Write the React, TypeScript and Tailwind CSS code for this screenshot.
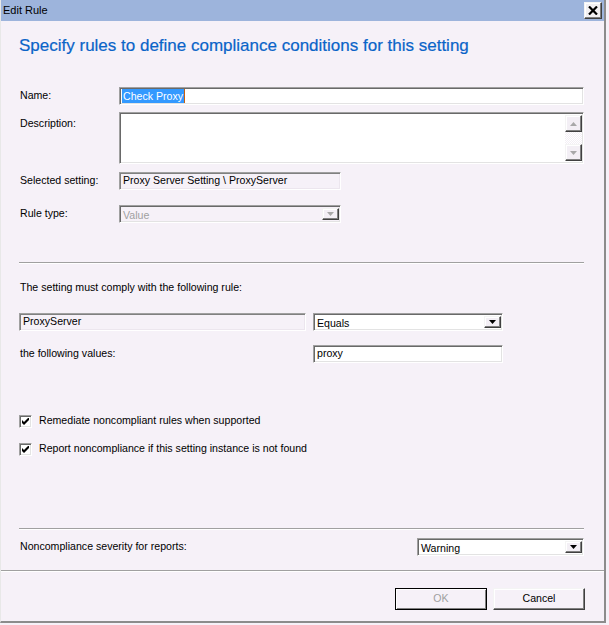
import React from 'react';

// classic sunken 3d border for edit fields
const sunken =
  'border border-t-[#a0a0a0] border-l-[#a0a0a0] border-r-white border-b-white shadow-[inset_1px_1px_0_#696969,inset_-1px_-1px_0_#e3e3e3]';
const sunkenFlat =
  'border border-t-[#a0a0a0] border-l-[#a0a0a0] border-r-white border-b-white shadow-[inset_1px_1px_0_#808080,inset_-1px_-1px_0_#ece6ee]';
const raised =
  'border border-t-[#f4f4f4] border-l-[#f4f4f4] border-r-[#404040] border-b-[#404040] shadow-[inset_-1px_-1px_0_#808080,inset_1px_1px_0_#ffffff]';

function Arrow({ up = false, color = '#000' }: { up?: boolean; color?: string }) {
  return (
    <svg width="7" height="4" viewBox="0 0 7 4" aria-hidden="true">
      <path d={up ? 'M0 4h7L3.5 0z' : 'M0 0h7L3.5 4z'} fill={color} />
    </svg>
  );
}

function DropButton({ disabled = false }: { disabled?: boolean }) {
  return (
    <div className={`flex h-full w-[17px] shrink-0 items-center justify-center bg-[#f3eff5] ${raised}`}>
      <Arrow color={disabled ? '#a8a8a8' : '#000'} />
    </div>
  );
}

function Combo({ value, disabled = false, className = '' }: { value: string; disabled?: boolean; className?: string }) {
  return (
    <div className={`flex h-[18px] items-stretch p-[2px] pr-[1px] ${sunken} ${disabled ? 'bg-[#f6f1f8]' : 'bg-white'} ${className}`}>
      <span className={`flex-1 pl-[1px] leading-[14px] ${disabled ? 'text-[#a0a0a0]' : 'text-black'}`}>{value}</span>
      <DropButton disabled={disabled} />
    </div>
  );
}

function CheckBox() {
  return (
    <div className={`flex h-[13px] w-[13px] shrink-0 items-center justify-center bg-white ${sunken}`}>
      <svg width="7" height="7" viewBox="0 0 7 7" aria-hidden="true">
        <path d="M0 2v3l2 2 5-5V-1L2 4z" fill="#000" />
      </svg>
    </div>
  );
}

function Separator() {
  return <div className="h-[2px] border-t border-t-[#a0a0a0] border-b border-b-white" />;
}

export default function App() {
  return (
    <div className="h-[625px] w-[609px] bg-[#f6f1f8] font-['Liberation_Sans',Arial,sans-serif] text-[10.6px] text-black">
      <div className="flex h-[623px] w-[606px] flex-col border-r-2 border-b-2 border-r-[#8c8c8c] border-b-[#8c8c8c] border-l border-l-[#e8e8e8]">
        {/* title bar */}
        <div className="flex h-[21px] shrink-0 items-center justify-between bg-[#9db4dc] pl-[2px] pr-[2px]">
          <span className="text-[11px]">Edit Rule</span>
          <div className={`flex h-[17px] w-[18px] items-center justify-center bg-[#f2f0f2] ${raised}`}>
            <svg width="10" height="9" viewBox="0 0 10 9" aria-hidden="true">
              <path d="M1 0.5l8 8M9 0.5l-8 8" stroke="#000" strokeWidth="2.2" />
            </svg>
          </div>
        </div>

        <div className="pl-[18px] pr-[20px]">
          <h1 className="mt-[15px] text-[17px] leading-[20px] text-[#0a64c8] [-webkit-text-stroke:0.2px_#0a64c8]">
            Specify rules to define compliance conditions for this setting
          </h1>

          {/* name */}
          <div className="mt-[31px] flex h-[18px] items-center">
            <span className="w-[100px] shrink-0 pl-[1px]">Name:</span>
            <div className={`flex h-[18px] flex-1 items-center bg-white pl-[2px] ${sunken}`}>
              <span className="bg-[#3399ff] px-px leading-[14px] text-white">Check Proxy</span>
              <span className="h-[14px] w-px bg-[#c86010]" />
            </div>
          </div>

          {/* description */}
          <div className="mt-[7px] flex h-[52px]">
            <span className="w-[100px] shrink-0 pl-[1px] pt-[4px]">Description:</span>
            <div className={`flex flex-1 justify-end bg-white p-[2px] pr-px ${sunken}`}>
              <div className="flex w-[17px] flex-col justify-between bg-[repeating-conic-gradient(#f3eff5_0_25%,#ffffff_0_50%)] bg-[length:2px_2px]">
                <div className={`flex h-[17px] items-center justify-center bg-[#f3eff5] ${raised}`}>
                  <Arrow up color="#a8a8a8" />
                </div>
                <div className={`flex h-[17px] items-center justify-center bg-[#f3eff5] ${raised}`}>
                  <Arrow color="#a8a8a8" />
                </div>
              </div>
            </div>
          </div>

          {/* selected setting */}
          <div className="mt-[8px] flex h-[18px] items-center">
            <span className="w-[100px] shrink-0 pl-[1px]">Selected setting:</span>
            <div className={`flex h-[18px] w-[222px] items-center pl-[3px] ${sunkenFlat}`}>
              Proxy Server Setting \ ProxyServer
            </div>
          </div>

          {/* rule type */}
          <div className="mt-[15px] flex h-[18px] items-center">
            <span className="w-[100px] shrink-0 pl-[1px]">Rule type:</span>
            <Combo value="Value" disabled className="w-[222px]" />
          </div>

          <div className="mt-[39px]">
            <Separator />
          </div>

          <p className="mt-[16px] h-[14px] pl-[1px] leading-[14px]">The setting must comply with the following rule:</p>

          <div className="mt-[19px] flex h-[18px] items-center gap-[7px]">
            <div className={`flex h-[18px] w-[287px] items-center pl-[3px] ${sunkenFlat}`}>ProxyServer</div>
            <Combo value="Equals" className="w-[190px]" />
          </div>

          <div className="mt-[14px] flex h-[18px] items-center">
            <span className="w-[294px] shrink-0 pl-[1px]">the following values:</span>
            <div className={`flex h-[18px] w-[190px] items-center bg-white pl-[3px] ${sunken}`}>proxy</div>
          </div>

          <label className="mt-[51px] flex h-[14px] items-center gap-[7px]">
            <CheckBox />
            <span>Remediate noncompliant rules when supported</span>
          </label>
          <label className="mt-[14px] flex h-[14px] items-center gap-[7px]">
            <CheckBox />
            <span>Report noncompliance if this setting instance is not found</span>
          </label>

          <div className="mt-[72px]">
            <Separator />
          </div>

          <div className="mt-[8px] flex h-[18px] items-center">
            <span className="flex-1 pl-[1px]">Noncompliance severity for reports:</span>
            <Combo value="Warning" className="w-[167px]" />
          </div>
        </div>

        <div className="mt-[14px]">
          <Separator />
        </div>

        <div className="mt-[16px] flex justify-end gap-[6px] pr-[19px]">
          <button
            disabled
            className="flex h-[22px] w-[92px] items-center justify-center border border-black bg-[#f6f1f8] text-[#a0a0a0] shadow-[inset_1px_1px_0_#ffffff,inset_-1px_-1px_0_#808080]"
          >
            OK
          </button>
          <button className={`flex h-[22px] w-[92px] items-center justify-center bg-[#f6f1f8] ${raised}`}>Cancel</button>
        </div>
      </div>
    </div>
  );
}
